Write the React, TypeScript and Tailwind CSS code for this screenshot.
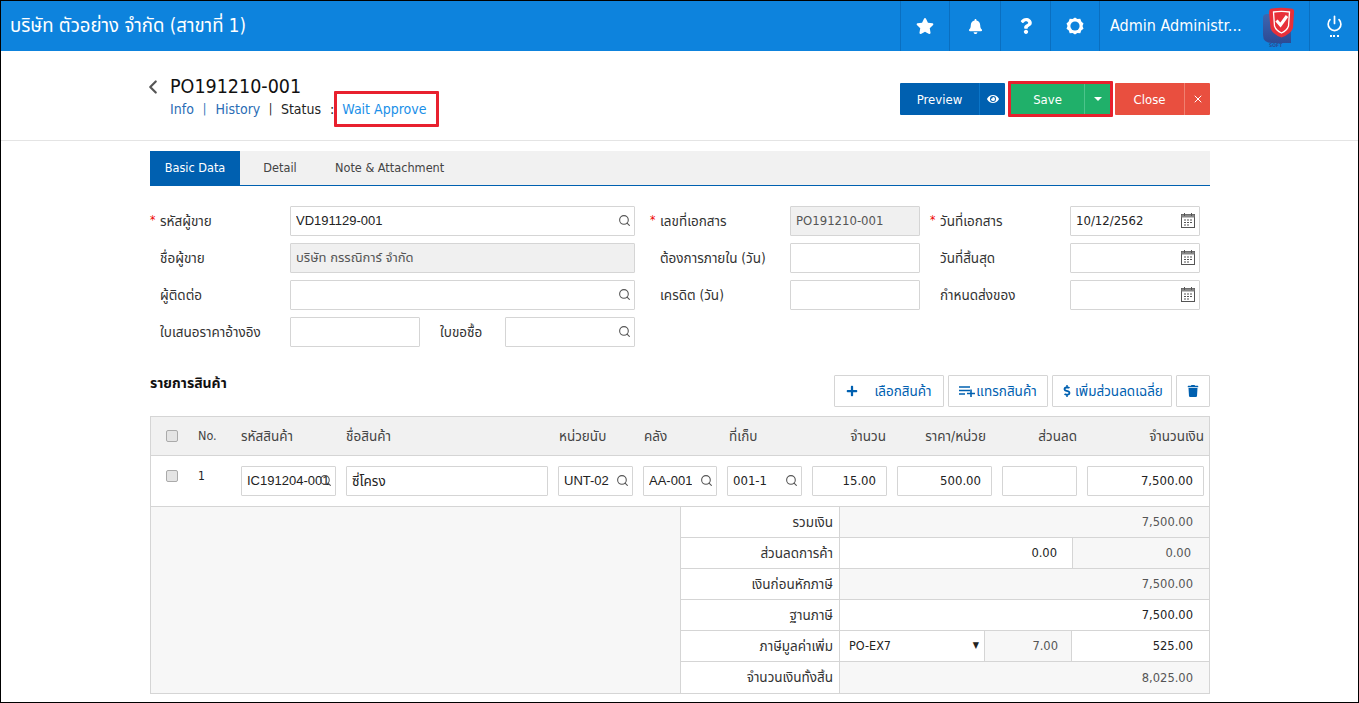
import React from "react";
import { FaStar, FaBell, FaQuestion, FaEye, FaTrash, FaDollarSign, FaPlus } from "react-icons/fa";
import { Search, X, Power, ChevronLeft } from "lucide-react";

const font = { fontFamily: '"DejaVu Sans Condensed", "Noto Sans", "Noto Sans Thai", "Noto Sans CJK SC", sans-serif' };

function Cal() {
  return (
    <svg width="16" height="17" viewBox="0 0 16 17" className="text-[#555]" fill="none" stroke="currentColor">
      <rect x="1.5" y="2.5" width="13" height="13" fill="#fff" />
      <rect x="1.5" y="2.5" width="13" height="3" fill="#888" stroke="none" />
      <path d="M4.5 1v3M11.5 1v3" />
      <path d="M4 8h2M7 8h2M10 8h2M4 10.5h2M7 10.5h2M10 10.5h2M4 13h2M7 13h2" strokeWidth="1" />
    </svg>
  );
}

function Field({ w, value, icon, disabled, right, arial, thai }: { w: string; value?: string; icon?: "s" | "c"; disabled?: boolean; right?: boolean; arial?: boolean; thai?: boolean }) {
  return (
    <div className={`${w} h-[30px] shrink-0 border border-[#d5d5d5] rounded-[1px] flex items-center relative ${disabled ? "bg-[#f0f0f0] text-[#555]" : "bg-white text-[#222]"} ${right ? "justify-end pr-[10px]" : "pl-[5px]"} ${thai ? "text-[13.5px]" : "text-[13px]"} ${arial ? "font-['Liberation_Sans']" : ""}`}>
      <span className="whitespace-nowrap overflow-hidden">{value}</span>
      {icon === "s" && <Search size={13} className="absolute right-[3px] top-[7px] text-[#555]" />}
      {icon === "c" && <span className="absolute right-[3px] top-[5px]"><Cal /></span>}
    </div>
  );
}

function Label({ text, req, w, pl }: { text: string; req?: boolean; w: string; pl?: string }) {
  return (
    <div className={`${w} shrink-0 flex items-center text-[13.5px] text-[#333] ${pl ?? "pl-[10px]"} relative`}>
      {req && <span className="absolute left-0 top-[5px] text-[#e00] text-[12px]">*</span>}
      {text}
    </div>
  );
}

function HCell({ w, children }: { w: string; children: React.ReactNode }) {
  return <div className={`${w} h-full flex items-center justify-center border-l border-[#0a6fc0] text-white`}>{children}</div>;
}

function IconBtn({ w, children }: { w: string; children: React.ReactNode }) {
  return <button className={`${w} h-[32px] border border-[#d5d5d5] rounded-[1px] bg-white flex items-center justify-center text-[13.5px] text-[#0060b0] whitespace-nowrap`}>{children}</button>;
}

function Sum({ label, children, last }: { label: string; children: React.ReactNode; last?: boolean }) {
  return (
    <div className={`flex h-[31px] ${last ? "" : "border-b border-[#d5d5d5]"}`}>
      <div className="w-[159px] shrink-0 border-r border-[#d5d5d5] flex items-center justify-end pr-[6px] text-[13.5px] text-[#333]">{label}</div>
      {children}
    </div>
  );
}

function Val({ v, gray, pr }: { v: string; gray?: boolean; pr?: string }) {
  return <div className={`flex-1 flex items-center justify-end ${pr ?? "pr-[16px]"} text-[12.8px] ${gray ? "bg-[#f7f7f7] text-[#555]" : "bg-white text-[#222]"}`}>{v}</div>;
}

export default function App() {
  return (
    <div style={font} className="w-[1359px] h-[703px] overflow-hidden bg-white border border-black text-[#222]">
      <header className="h-[50px] bg-[#0d83dd] flex items-center text-white">
        <div className="pl-[9px] text-[18.6px] flex-1">บริษัท ตัวอย่าง จำกัด (สาขาที่ 1)</div>
        <HCell w="w-[49px]"><FaStar size={18} /></HCell>
        <HCell w="w-[51px]"><FaBell size={15} /></HCell>
        <HCell w="w-[50px]"><FaQuestion size={16} /></HCell>
        <HCell w="w-[49px]">
          <svg width="18" height="18" viewBox="0 0 18 18"><path d="M9 0.5l2.4 1.6 2.9-.4 1 2.8 2.2 1.9-1 2.6 1 2.7-2.3 1.8-.9 2.8-2.9-.3L9 17.5l-2.4-1.5-2.9.3-.9-2.8L.5 11.7l1-2.7-1-2.6 2.2-1.9 1-2.8 2.9.4z" fill="#fff" /><circle cx="9" cy="9" r="4.6" fill="#0d83dd" /></svg>
        </HCell>
        <div className="w-[210px] h-full border-l border-[#0a6fc0] flex items-center pl-[10px] relative text-[16px]">
          <span>Admin Administr...</span>
          <svg width="38" height="44" viewBox="0 0 38 44" className="absolute left-[161px] top-[4px]">
            <defs>
              <linearGradient id="lg" x1="0" y1="0" x2="0" y2="1">
                <stop offset="0" stopColor="#3f66b0" />
                <stop offset="1" stopColor="#2c4a94" />
              </linearGradient>
            </defs>
            <path d="M6 9h24v29H11q-9 0-9-8V13q0-4 4-4z" fill="url(#lg)" />
            <path d="M11 3.500Q20 2 30 3.500q3.500 0 3 4L32 23q-2 6-11.500 9.500Q11 29 9.500 23L8 7.500q0-4 3-4z" fill="#e8303a" />
            <path d="M12.500 7q8-1.300 16 0l-1 14q-1.500 4.500-7 7-5.500-2.500-7-7z" fill="none" stroke="#fff" strokeWidth="1.3" />
            <path d="M15.500 15.500l4 4.500 6.500-9" fill="none" stroke="#fff" strokeWidth="3" />
            <text x="8" y="42" fontSize="5" fontWeight="700" fill="#2c4a94">SOFT</text>
          </svg>
        </div>
        <div className="w-[49px] h-full border-l border-[#0a6fc0] flex flex-col items-center justify-center gap-[3px]">
          <Power size={17} strokeWidth={2.4} />
          <div className="flex gap-[1.5px]">
            <span className="w-[2px] h-[2px] bg-white" />
            <span className="w-[2px] h-[2px] bg-white" />
            <span className="w-[2px] h-[2px] bg-white" />
          </div>
        </div>
      </header>

      <div className="h-[90px] border-b border-[#e4e4e4] pl-[149px] pr-[148px] flex justify-between">
        <div className="pt-[24px]">
          <div className="flex items-center h-[24px]">
            <div className="w-[20px] h-[22px] relative"><ChevronLeft size={22} strokeWidth={2.4} className="text-[#555] -ml-[8px]" /></div>
            <span className="text-[19.5px] text-[#111]">PO191210-001</span>
          </div>
          <div className="flex items-center h-[36px] -mt-[8px] pl-[20px] text-[14px]">
            <span className="text-[#2a6db5]">Info</span>
            <span className="text-[#2a6db5] mx-[9px] text-[12px]">|</span>
            <span className="text-[#2a6db5]">History</span>
            <span className="mx-[8.5px] text-[12px]">|</span>
            <span>Status</span>
            <span className="ml-[9px]">:</span>
            <div className="w-[105px] h-[36px] border-[3px] border-[#e8202e] rounded-[1px] flex items-center pl-[5px] text-[#1a8fe8] whitespace-nowrap">Wait Approve</div>
          </div>
        </div>
        <div className="pt-[30px] flex items-start text-white text-[13px]">
          <div className="mt-[2px] flex h-[32px] w-[105px] bg-[#0060b0] rounded-[1px]">
            <div className="w-[79px] pt-px flex items-center justify-center">Preview</div>
            <div className="flex-1 border-l border-[#0a75c8] flex items-center justify-center"><FaEye size={12} /></div>
          </div>
          <div className="ml-[3px] h-[36px] w-[105px] border-[3px] border-[#e8202e] rounded-[1px] bg-[#20b06a] flex">
            <div className="w-[73px] pt-px flex items-center justify-center">Save</div>
            <div className="flex-1 border-l border-[#4cc48b] flex items-center justify-center">
              <span className="w-0 h-0 border-l-[4px] border-r-[4px] border-t-[4px] border-l-transparent border-r-transparent border-t-white" />
            </div>
          </div>
          <div className="ml-[2px] mt-[2px] flex h-[32px] w-[95px] bg-[#e94f3f] rounded-[1px]">
            <div className="w-[69px] pt-px flex items-center justify-center">Close</div>
            <div className="flex-1 border-l border-[#f08070] flex items-center justify-center"><X size={12} /></div>
          </div>
        </div>
      </div>

      <main className="pl-[149px] w-[1209px]">
        <div className="mt-[10px] h-[35px] bg-[#f1f1f1] border-b border-[#0060b0] flex items-stretch text-[12.6px] text-[#444]">
          <div className="w-[90px] bg-[#0060b0] text-white flex items-center justify-center">Basic Data</div>
          <div className="w-[80px] flex items-center justify-center">Detail</div>
          <div className="ml-[15px] flex items-center">Note &amp; Attachment</div>
        </div>

        <div className="mt-[20px] flex flex-col gap-[7px]">
          <div className="flex">
            <Label w="w-[140px]" text="รหัสผู้ขาย" req />
            <Field w="w-[345px]" value="VD191129-001" icon="s" arial />
            <div className="w-[15px]" />
            <Label w="w-[140px]" text="เลขที่เอกสาร" req />
            <Field w="w-[130px]" value="PO191210-001" disabled />
            <div className="w-[10px]" />
            <Label w="w-[140px]" text="วันที่เอกสาร" req />
            <Field w="w-[130px]" value="10/12/2562" icon="c" />
          </div>
          <div className="flex">
            <Label w="w-[140px]" text="ชื่อผู้ขาย" />
            <Field w="w-[345px]" value="บริษัท กรรณิการ์ จำกัด" disabled />
            <div className="w-[15px]" />
            <Label w="w-[140px]" text="ต้องการภายใน (วัน)" />
            <Field w="w-[130px]" />
            <div className="w-[10px]" />
            <Label w="w-[140px]" text="วันที่สิ้นสุด" />
            <Field w="w-[130px]" icon="c" />
          </div>
          <div className="flex">
            <Label w="w-[140px]" text="ผู้ติดต่อ" />
            <Field w="w-[345px]" icon="s" />
            <div className="w-[15px]" />
            <Label w="w-[140px]" text="เครดิต (วัน)" />
            <Field w="w-[130px]" />
            <div className="w-[10px]" />
            <Label w="w-[140px]" text="กำหนดส่งของ" />
            <Field w="w-[130px]" icon="c" />
          </div>
          <div className="flex">
            <Label w="w-[140px]" text="ใบเสนอราคาอ้างอิง" />
            <Field w="w-[130px]" />
            <Label w="w-[85px]" text="ใบขอซื้อ" pl="pl-[20px]" />
            <Field w="w-[130px]" icon="s" />
          </div>
        </div>

        <div className="mt-[26px] flex justify-between h-[43px]">
          <div className="text-[14px] font-bold text-[#111]">รายการสินค้า</div>
          <div className="flex gap-[4px] pt-[2px] h-[34px]">
            <IconBtn w="w-[110px]"><FaPlus size={12} className="mr-[16px]" />เลือกสินค้า</IconBtn>
            <IconBtn w="w-[100px]">
              <svg width="16" height="11" viewBox="0 0 16 11" className="mr-[1px] shrink-0" fill="none" stroke="currentColor" strokeWidth="1.6"><path d="M0 1h11M0 4.500h11M0 8h6M8 7.500h8M12 3.500v7.500" /></svg>
              แทรกสินค้า
            </IconBtn>
            <IconBtn w="w-[120px]"><FaDollarSign size={12} className="mr-[2px] shrink-0" />เพิ่มส่วนลดเฉลี่ย</IconBtn>
            <IconBtn w="w-[34px]"><FaTrash size={12} /></IconBtn>
          </div>
        </div>

        <div className="border border-[#d5d5d5]">
          <div className="h-[39px] bg-[#f1f1f1] border-b border-[#d5d5d5] flex items-center text-[13.5px] text-[#444] whitespace-nowrap">
            <span className="ml-[15px] w-[12px] h-[12px] border border-[#aaa] rounded-[2px] bg-[#e4e4e4]" />
            <span className="ml-[20px] w-[43px] text-[12.5px]">No.</span>
            <span className="w-[105px]">รหัสสินค้า</span>
            <span className="w-[213px]">ชื่อสินค้า</span>
            <span className="w-[85px]">หน่วยนับ</span>
            <span className="w-[85px]">คลัง</span>
            <span className="w-[85px]">ที่เก็บ</span>
            <span className="w-[72px] text-right">จำนวน</span>
            <span className="w-[100px] text-right">ราคา/หน่วย</span>
            <span className="w-[91px] text-right">ส่วนลด</span>
            <span className="w-[127px] text-right">จำนวนเงิน</span>
          </div>
          <div className="h-[51px] border-b border-[#d5d5d5] flex items-start pt-[10px]">
            <span className="ml-[15px] w-[12px] h-[12px] border border-[#aaa] rounded-[2px] bg-[#e4e4e4] mt-[4px]" />
            <span className="ml-[20px] w-[43px] mt-[1px] text-[12px]">1</span>
            <div className="flex gap-[10px]">
              <Field w="w-[95px]" value="IC191204-001" icon="s" arial />
              <Field w="w-[202px]" value="ซี่โครง" thai />
              <Field w="w-[75px]" value="UNT-02" icon="s" arial />
              <Field w="w-[74px]" value="AA-001" icon="s" arial />
              <Field w="w-[75px]" value="001-1" icon="s" />
              <Field w="w-[75px]" value="15.00" right />
              <Field w="w-[95px]" value="500.00" right />
              <Field w="w-[75px]" />
              <Field w="w-[117px]" value="7,500.00" right />
            </div>
          </div>
          <div className="flex">
            <div className="w-[530px] shrink-0 bg-[#f7f7f7] border-r border-[#d5d5d5]" />
            <div className="flex-1">
              <Sum label="รวมเงิน"><Val v="7,500.00" gray /></Sum>
              <Sum label="ส่วนลดการค้า">
                <Val v="0.00" pr="pr-[15px]" />
                <div className="w-[137px] border-l border-[#d5d5d5] bg-[#f7f7f7] flex items-center justify-end pr-[18px] text-[12.8px] text-[#555]">0.00</div>
              </Sum>
              <Sum label="เงินก่อนหักภาษี"><Val v="7,500.00" gray /></Sum>
              <Sum label="ฐานภาษี"><Val v="7,500.00" /></Sum>
              <Sum label="ภาษีมูลค่าเพิ่ม">
                <div className="w-[144px] flex items-center justify-between pl-[9px] pr-[5px] text-[12.5px]"><span>PO-EX7</span><span className="text-[9px]">▼</span></div>
                <div className="w-[88px] bg-[#f7f7f7] border-x border-[#d5d5d5] flex items-center justify-end pr-[13px] text-[12.8px] text-[#555]">7.00</div>
                <Val v="525.00" />
              </Sum>
              <Sum label="จำนวนเงินทั้งสิ้น" last><Val v="8,025.00" gray /></Sum>
            </div>
          </div>
        </div>
      </main>
    </div>
  );
}
